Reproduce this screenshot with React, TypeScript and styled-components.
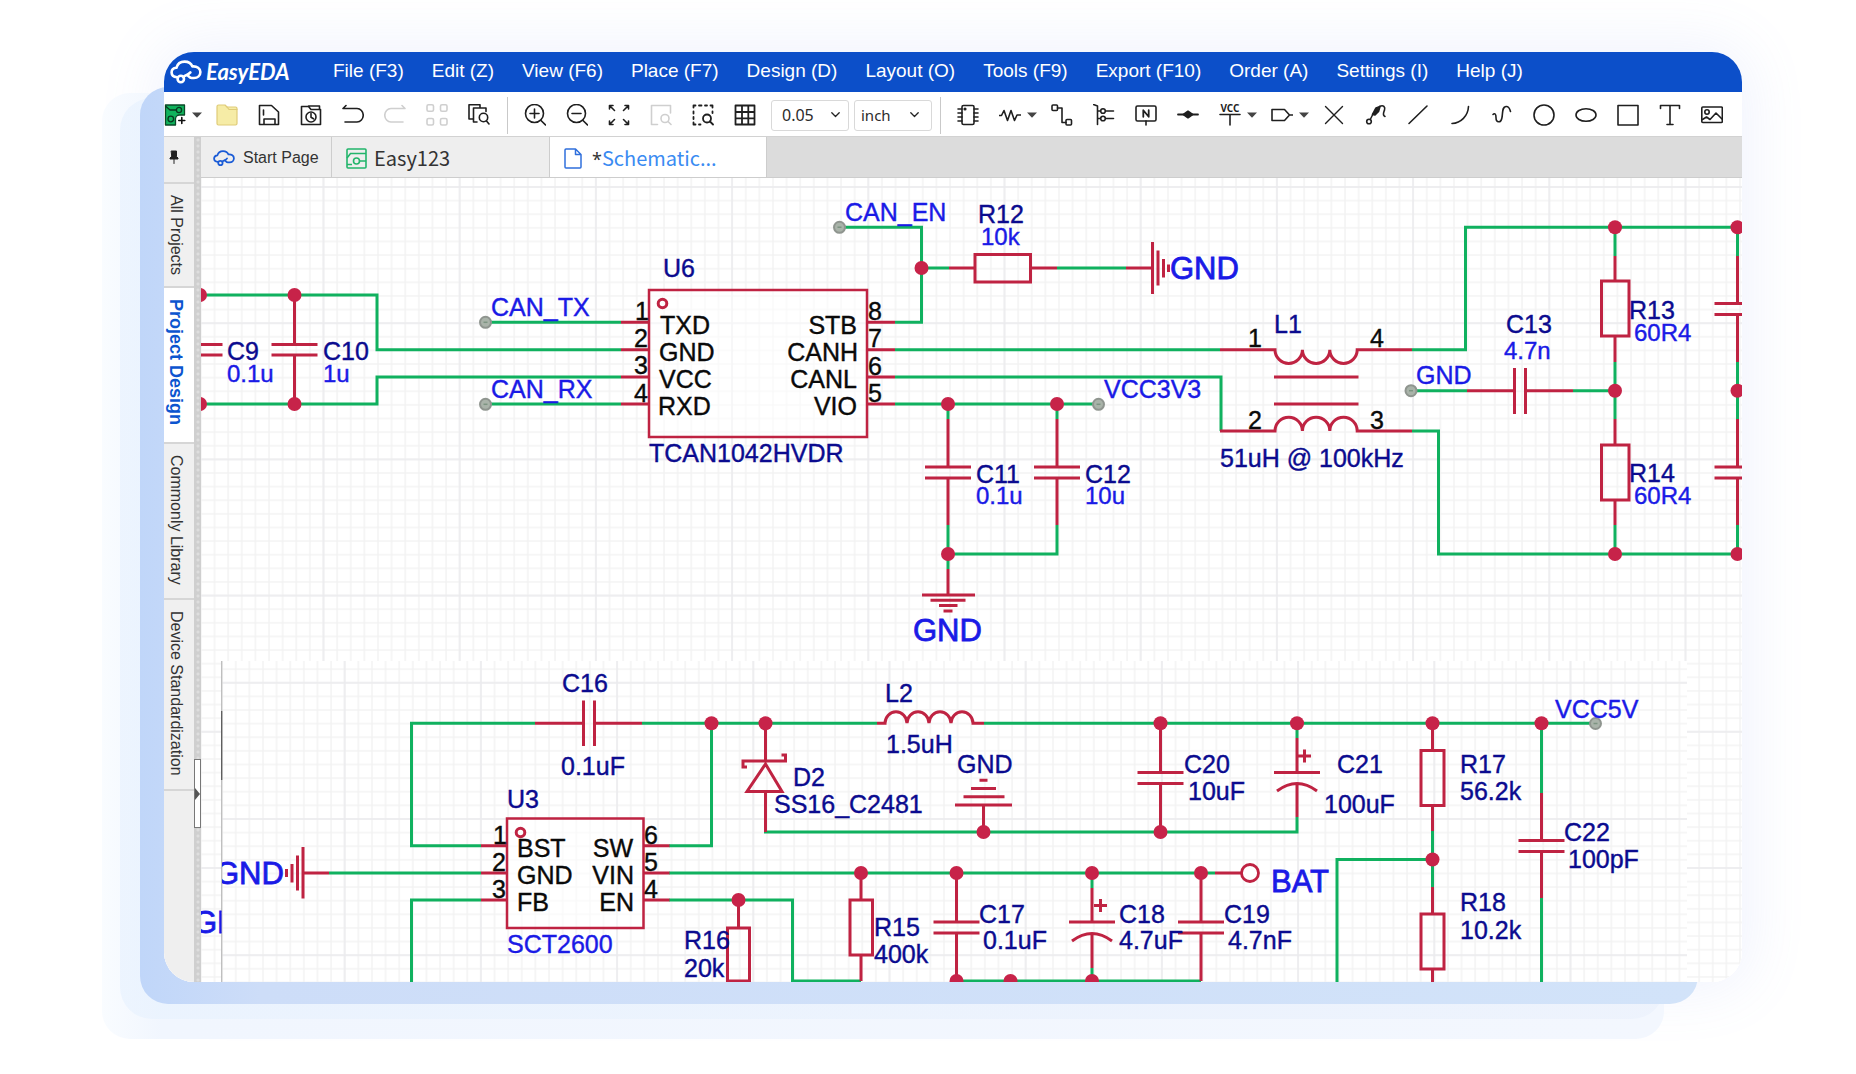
import React from "react";
import styled, { createGlobalStyle, css } from "styled-components";

const GlobalStyle = createGlobalStyle`
  * { box-sizing: border-box; }
  body {
    margin: 0;
    background: #ffffff;
    font-family: "Liberation Sans", Arial, sans-serif;
    color: #222;
    overflow-x: hidden;
  }
  button { font: inherit; color: inherit; border: 0; background: none; padding: 0; cursor: pointer; }
`;

/* ---------- page frame ---------- */

const Page = styled.div`
  padding: 52px 114px 92px 164px;
`;

const Stage = styled.div`
  position: relative;
  isolation: isolate;
`;

const BackCard = styled.div<{ $depth: "near" | "mid" | "far" }>`
  position: absolute;
  z-index: -1;
  ${(p) =>
    p.$depth === "near" &&
    css`
      inset: 35px 44px -22px -24px;
      border-radius: 28px;
      background: linear-gradient(to right, #c0d6f9 0, #cdddf8 120px, #d2e3f9 100%);
    `}
  ${(p) =>
    p.$depth === "mid" &&
    css`
      inset: 46px 78px -37px -44px;
      border-radius: 32px;
      background: linear-gradient(to right, rgba(232, 242, 254, 0.7), rgba(235, 241, 252, 0.7));
    `}
  ${(p) =>
    p.$depth === "far" &&
    css`
      inset: 41px 78px -57px -62px;
      border-radius: 28px;
      background: linear-gradient(to right, #f9fcff 0, #f1f6fe 60px, #f3f7fe 100%);
    `}
`;

const Window = styled.main`
  display: flex;
  flex-direction: column;
  overflow: hidden;
  border-radius: 30px;
  background: #fff;
`;

const Glow = styled.div`
  position: absolute;
  inset: 0;
  z-index: -1;
  border-radius: 30px;
  box-shadow: 0 0 60px 6px rgba(120, 150, 235, 0.12);
`;

/* ---------- title bar ---------- */

const TitleBar = styled.header`
  display: flex;
  align-items: center;
  height: 40px;
  padding-left: 6px;
  background: #0c4fc9;
  color: #fff;
`;

const Brand = styled.a`
  display: flex;
  align-items: center;
  gap: 4px;
  width: 150px;
  color: #fff;
  text-decoration: none;
  font: italic 700 22px/28px Lato, sans-serif;
`;

const Menu = styled.nav`
  display: flex;
  align-items: center;
  margin-left: 13px;
  gap: 28px;
`;

const MenuButton = styled.button`
  font-size: 19px;
  line-height: 24px;
  white-space: nowrap;
  padding-bottom: 2px;
`;

/* ---------- toolbar ---------- */

const ToolBar = styled.div`
  display: flex;
  align-items: center;
  height: 45px;
  padding-top: 2px;
  border-bottom: 1px solid #d2d2d2;
  background: #fff;
`;

const Tool = styled.button<{ $width?: number; $off?: boolean }>`
  display: flex;
  align-items: center;
  justify-content: center;
  flex: none;
  width: ${(p) => p.$width ?? 42}px;
  height: 36px;
  color: ${(p) => (p.$off ? "#cfcfcf" : "#1f1f1f")};
`;

const CaretButton = styled(Tool)`
  padding-left: 2px;
`;

const Split = styled.div<{ $tight?: boolean }>`
  display: flex;
  flex: none;
  padding-left: ${(p) => (p.$tight ? 0 : 10)}px;
`;

const Rule = styled.div<{ $side: number }>`
  flex: none;
  width: 1px;
  height: 37px;
  margin: 0 6px 0 ${(p) => p.$side}px;
  background: #c9c9c9;
`;

const Picker = styled.label<{ $text: number }>`
  position: relative;
  display: flex;
  align-items: center;
  flex: none;
  width: 78px;
  height: 31px;
  margin-left: 5px;
  border: 1px solid #d9d9d9;
  border-radius: 3px;
  select {
    appearance: none;
    width: 100%;
    height: 100%;
    border: 0;
    background: none;
    padding: 0 20px 0 ${(p) => (p.$text === 16 ? 10 : 6)}px;
    color: #2b2b2b;
    font: ${(p) => p.$text}px/28px "Noto Sans", sans-serif;
  }
  svg {
    position: absolute;
    right: ${(p) => (p.$text === 16 ? 8 : 12)}px;
    pointer-events: none;
  }
`;

/* ---------- body ---------- */

const Body = styled.div`
  display: flex;
  background: #fff;
`;

const SideBar = styled.aside`
  display: flex;
  flex-direction: column;
  flex: none;
  width: 30px;
  background: #efefef;
`;

const PinButton = styled.button`
  display: flex;
  justify-content: center;
  padding-top: 13px;
  padding-right: 10px;
  height: 47px;
  border-bottom: 2px solid #d6d6d6;
`;

const SideTab = styled.button<{ $active?: boolean; $size: number }>`
  writing-mode: vertical-rl;
  height: ${(p) => p.$size}px;
  width: 30px;
  padding: 11px 6px 0 0;
  text-align: left;
  line-height: 22px;
  white-space: nowrap;
  border-bottom: 2px solid #d6d6d6;
  font-size: ${(p) => (p.$active ? 18 : 16)}px;
  font-weight: ${(p) => (p.$active ? 700 : 400)};
  color: ${(p) => (p.$active ? "#0c55cf" : "#333")};
  background: ${(p) => (p.$active ? "#fff" : "#f0f0f0")};
`;

const Splitter = styled.div`
  display: flex;
  flex-direction: column;
  flex: none;
  width: 7px;
  padding-top: 622px;
  background: radial-gradient(circle at 4px 3px, #dedede 0 1px, transparent 2px) 0 0 / 7px 6px, #cfcfcf;
`;

const Collapse = styled.button`
  display: flex;
  align-items: center;
  width: 7px;
  height: 69px;
  border: 1px solid #777;
  background: #fff;
`;

const Workspace = styled.section`
  display: flex;
  flex-direction: column;
  flex: 1;
  min-width: 0;
`;

const TabStrip = styled.div`
  display: flex;
  height: 41px;
  background: #dcdcdc;
  border-bottom: 1px solid #cdcdcd;
`;

const Tab = styled.button<{ $width: number; $active?: boolean; $big?: boolean }>`
  display: flex;
  align-items: center;
  gap: ${(p) => (p.$big ? 7 : 8)}px;
  width: ${(p) => p.$width}px;
  padding-top: 2px;
  padding-left: ${(p) => (p.$big ? 14 : 12)}px;
  border-right: 1px solid #cdcdcd;
  background: ${(p) => (p.$active ? "#fff" : "#eeeeee")};
  color: #333;
  white-space: nowrap;
  font: ${(p) => (p.$big ? '20px/26px "Noto Sans CJK SC"' : '16px/22px "Liberation Sans"')}, sans-serif;
`;

const FileName = styled.span`
  padding-left: 3px;
  i { font-style: normal; font-family: "Noto Sans", sans-serif; font-size: 18px; }
  b { font-weight: 400; color: #3a8bf2; }
`;

const Sheet = styled.svg`
  display: block;
  width: 100%;
  height: auto;
  font-family: "Liberation Sans", Arial, sans-serif;
`;

/* ---------- icons ---------- */

const Icon = ({ children, w = 22, h = 22, sw = 1.6 }: { children: React.ReactNode; w?: number; h?: number; sw?: number }) => (
  <svg width={w} height={h} viewBox={`0 0 ${w} ${h}`} fill="none" stroke="currentColor" strokeWidth={sw} strokeLinecap="round" strokeLinejoin="round" aria-hidden="true">
    {children}
  </svg>
);

const Caret = () => (
  <Icon w={10} h={6}>
    <path d="M0 0.5h10L5 5.8z" fill="#444" stroke="none" />
  </Icon>
);

const Chevron = () => (
  <Icon w={9} h={6} sw={1.3}>
    <path d="M0.8 0.8l3.7 3.7 3.7-3.7" />
  </Icon>
);

const Cloud = ({ size, color, sw }: { size: number; color: string; sw: number }) => (
  <svg width={size} height={(size * 24) / 32} viewBox="0 0 32 24" fill="none" stroke={color} strokeWidth={sw} strokeLinecap="round" strokeLinejoin="round" aria-hidden="true">
    <path d="M7 17.200C3.600 16.800 1.600 15 1.600 12.400c0-2.600 2-4.400 4.800-4.600C7.400 4 10.600 1.600 14.600 1.600c3.800 0 6.600 1.800 7.800 4.800 4.600-.4 8 2 8 5.600 0 3.600-2.800 6-6.400 6h-2.400c-2 0-2.800-1.600-4.200-2.800" />
    <circle cx="10.800" cy="19" r="3.200" />
    <path d="M13.400 17c2.600-3 4-1 7-4.600" />
  </svg>
);

const icons: Record<string, React.ReactNode> = {
  create: (
    <Icon w={22} h={22} sw={1.3}>
      <path d="M1.500 1h19v10h-5a4 4 0 00-4 4V21H1.500z" fill="#10b35c" stroke="#0a4a28" />
      <path d="M2 2.500l4 3.500h6.500" stroke="#083a20" />
      <circle cx="15" cy="6" r="2.600" stroke="#083a20" />
      <circle cx="6.800" cy="15" r="2.800" stroke="#083a20" />
      <path d="M17.800 13.500v6M14.800 16.500h6" stroke="#111" strokeWidth="1.600" />
    </Icon>
  ),
  open: (
    <Icon sw={1.2}>
      <path d="M1 2.500a1.500 1.500 0 011.500-1.500h6.500l2 2H19.500A1.500 1.500 0 0121 4.500v15a1.500 1.500 0 01-1.500 1.500h-17A1.500 1.500 0 011 19.500z" fill="#f6eca6" stroke="#dfcb78" />
      <path d="M11 3l2 2.500h8" stroke="#dfcb78" />
    </Icon>
  ),
  save: (
    <Icon>
      <path d="M1.500 1.500h12l7 6.500v12.500h-19zM5.500 6v5M6 20.500v-5.500h11v5.500" />
    </Icon>
  ),
  history: (
    <Icon>
      <path d="M1.500 20.500v-18h7l2.500 3h9.500v15zM8.500 2h11v3" />
      <circle cx="11" cy="13" r="5" />
      <path d="M11 9.500v3.800l2.500 1.500" />
    </Icon>
  ),
  undo: (
    <Icon>
      <path d="M4 1.500L1 4.500h14a6 6.500 0 010 13.500H3" />
    </Icon>
  ),
  redo: (
    <Icon>
      <path d="M18 1.500L21 4.500H7a6 6.500 0 000 13.500h12" />
    </Icon>
  ),
  tiles: (
    <Icon>
      <rect x="1" y="0.800" width="6.500" height="6.500" rx="1.500" />
      <rect x="14.500" y="0.800" width="6.500" height="6.500" rx="1.500" />
      <rect x="1" y="14.500" width="6.500" height="6.500" rx="1.500" />
      <rect x="14.500" y="14.500" width="6.500" height="6.500" rx="1.500" />
    </Icon>
  ),
  find: (
    <Icon>
      <path d="M4.500 15H1V0.800h11V4M9 18H5.500V4h12.500v3.500" />
      <circle cx="15.500" cy="13.500" r="4.200" />
      <path d="M18.500 17l2.500 3" />
    </Icon>
  ),
  zoomIn: (
    <Icon>
      <circle cx="10.500" cy="9.500" r="9" />
      <path d="M17 16.500l4.500 4.500M10.500 5v9M6 9.500h9" />
    </Icon>
  ),
  zoomOut: (
    <Icon>
      <circle cx="10.500" cy="9.500" r="9" />
      <path d="M17 16.500l4.500 4.500M6 9.500h9" />
    </Icon>
  ),
  fit: (
    <Icon>
      <path d="M1.500 5v-3.500h3.500M1.500 1.500l5 5M17 1.500h3.500v3.500M20.500 1.500l-5 5M1.500 17v3.500h3.500M1.500 20.500l5-5M20.500 17v3.500h-3.500M20.500 20.500l-5-5" />
    </Icon>
  ),
  zoomSel: (
    <Icon>
      <path d="M7.500 20.500h-6v-19h19V9" />
      <circle cx="15" cy="14.500" r="4" />
      <path d="M18 17.500l3 3" />
    </Icon>
  ),
  marquee: (
    <Icon sw={1.8}>
      <path d="M1.500 3.500v-2h2M7 1.500h2.500M13 1.500h2M18.500 1.500h2v2M1.500 7.500v2M1.500 13v2M1.500 18.500v2h2M7 20.500h1.500M20.500 7.500v1.500" />
      <circle cx="15" cy="14.500" r="4" />
      <path d="M18 17.500l3 3" />
    </Icon>
  ),
  grid: (
    <Icon sw={1.8}>
      <path d="M1.500 1.500h19v19h-19zM8 1.500v19M14.300 1.500v19M1.500 8h19M1.500 14.300h19" />
    </Icon>
  ),
  chip: (
    <Icon>
      <rect x="5" y="1.500" width="12" height="19" rx="1.500" />
      <path d="M1 5h4M1 9h4M1 13h4M1 17h4M17 5h4M17 9h4M17 13h4M17 17h4" />
      <circle cx="8" cy="5" r="0.800" fill="currentColor" />
    </Icon>
  ),
  resistor: (
    <Icon>
      <path d="M0.500 11.500h2L5 6.500l3.500 10L12 6.500l3.500 10 2.500-5.500h3.500" />
    </Icon>
  ),
  wire: (
    <Icon>
      <rect x="1" y="1" width="5.500" height="5.500" rx="1" />
      <rect x="15" y="15.500" width="5.500" height="5.500" rx="1" />
      <path d="M6.500 4H11v14.500h4" />
    </Icon>
  ),
  bus: (
    <Icon>
      <path d="M0.500 0.500l4 1.500v18.500M4.500 7h16M4.500 14.500h16" />
      <circle cx="10" cy="7" r="2.300" fill="#fff" />
      <circle cx="10" cy="14.500" r="2.300" fill="#fff" />
    </Icon>
  ),
  net: (
    <Icon>
      <rect x="1" y="2" width="20" height="15" rx="1.500" />
      <path d="M11 17v4" />
      <path d="M8.300 12.800V6.200l5.400 6.600V6.200" strokeWidth="1.800" />
    </Icon>
  ),
  junction: (
    <Icon sw={1.8}>
      <path d="M1 10.500h20" />
      <path d="M6.500 10.500L11 7.300l4.500 3.200L11 13.700z" fill="currentColor" />
    </Icon>
  ),
  power: (
    <Icon>
      <text x="11" y="7.500" textAnchor="middle" fontSize="10" fontWeight="700" fontFamily="Noto Sans, sans-serif" fill="currentColor" stroke="none">VCC</text>
      <path d="M1 10.500h20M11 10.500v10.500" />
    </Icon>
  ),
  port: (
    <Icon>
      <path d="M1 5.500h12.500l5 5.500-5 5.500H1zM18.500 11H21.500" />
    </Icon>
  ),
  cross: (
    <Icon sw={1.4}>
      <path d="M2.500 2.500l17 17M19.500 2.500l-17 17" />
    </Icon>
  ),
  probe: (
    <Icon>
      <circle cx="4" cy="17.500" r="2.300" />
      <path d="M5.500 15L8 10" />
      <path d="M7.500 10.500L11 4l4-1.500-1.500 5L10 11z" fill="currentColor" />
      <path d="M14.500 2.500c4-2 6 .5 5 3.500s-2.500 5 .5 6.500" />
    </Icon>
  ),
  line: (
    <Icon>
      <path d="M2 19.500L20 2" />
    </Icon>
  ),
  arc: (
    <Icon>
      <path d="M19.500 2.500C19 12 12 19 3 19.500" />
    </Icon>
  ),
  curve: (
    <Icon>
      <path d="M2 10.500c2-2 3 0 3 3 0 5.500 5 6 6 0s0-10.500 4-11c3-.3 4 3 4.500 5" />
    </Icon>
  ),
  circle: (
    <Icon>
      <circle cx="11" cy="11" r="10" />
    </Icon>
  ),
  ellipse: (
    <Icon>
      <ellipse cx="11" cy="11" rx="10" ry="6.300" />
    </Icon>
  ),
  square: (
    <Icon>
      <rect x="1" y="1.500" width="20" height="19.500" />
    </Icon>
  ),
  text: (
    <Icon>
      <path d="M1.500 4.500v-3h19v3M11 1.500v19M8 20.500h6" />
    </Icon>
  ),
  image: (
    <Icon>
      <rect x="0.800" y="3" width="20.500" height="15.500" rx="1" />
      <circle cx="6" cy="8" r="2.200" />
      <path d="M1.500 15.500l4-2.500 3.500 2.500 6-6.500 6 6" />
    </Icon>
  ),
};

const fileTools = ["open", "save", "history", "undo", "redo", "tiles", "find"];
const viewTools = ["zoomIn", "zoomOut", "fit", "zoomSel", "marquee", "grid"];
const wireTools = ["wire", "bus", "net", "junction"];
const drawTools = ["cross", "probe", "line", "arc", "curve", "circle", "ellipse", "square", "text", "image"];
const disabled = ["redo", "tiles", "zoomSel"];

const ToolList = ({ names }: { names: string[] }) => (
  <>
    {names.map((n) => (
      <Tool key={n} aria-label={n} $off={disabled.includes(n)}>
        {icons[n]}
      </Tool>
    ))}
  </>
);

const SplitTool = ({ name, tight }: { name: string; tight?: boolean }) => (
  <Split $tight={tight}>
    <Tool $width={22} aria-label={name}>{icons[name]}</Tool>
    <CaretButton $width={20} aria-label={`${name} options`}><Caret /></CaretButton>
  </Split>
);

/* ---------- schematic ---------- */

const GREEN = "#10b15f";
const RED = "#bf2342";
const DOT = "#c72349";
const NAVY = "#0b0b8f";
const BLUE = "#1a1ae6";

const Wires = ({ d }: { d: string }) => <path d={d} fill="none" stroke={GREEN} strokeWidth="3" />;
const Part = ({ d }: { d: string }) => <path d={d} fill="none" stroke={RED} strokeWidth="3" strokeLinejoin="miter" />;
const Dots = ({ at }: { at: number[][] }) => (
  <>
    {at.map(([x, y]) => (
      <circle key={`${x}-${y}`} cx={x} cy={y} r="7" fill={DOT} />
    ))}
  </>
);
const Ports = ({ at }: { at: number[][] }) => (
  <>
    {at.map(([x, y]) => (
      <g key={`${x}-${y}`}>
        <circle cx={x} cy={y} r="5.500" fill="#a9b3a9" stroke="#8f958f" strokeWidth="2" />
        <path d={`M${x - 2} ${y}h4`} stroke="#7d9482" strokeWidth="1.500" />
      </g>
    ))}
  </>
);
const capV = (x: number, y: number) => `M${x - 23} ${y}h46M${x - 23} ${y + 11}h46`;

type Label = [string, number, number];
const Labels = ({ items, fill, size = 25, anchor }: { items: Label[]; fill: string; size?: number; anchor?: "end" | "middle" }) => (
  <g fill={fill} stroke={fill} strokeWidth={size > 30 ? 0.8 : 0.4} fontSize={size} textAnchor={anchor}>
    {items.map(([t, x, y]) => (
      <text key={`${t}-${x}-${y}`} x={anchor ? x : x + 1} y={y}>{t}</text>
    ))}
  </g>
);

const FINE = "#f3f3f3";
const COARSE = "#ebebee";

const Schematic = () => (
  <Sheet viewBox="201 178 1541 804" role="img" aria-label="CAN transceiver and power supply schematic">
    <defs>
      <pattern id="fine" width="13.620" height="13.620" patternUnits="userSpaceOnUse" x="322.500" y="186">
        <path d="M0 1H13.620M1 0V13.620" stroke={FINE} strokeWidth="1.500" />
      </pattern>
      <pattern id="coarse" width="136.200" height="136.200" patternUnits="userSpaceOnUse" x="322.500" y="186">
        <path d="M0 1H136.200M1 0V136.200" stroke={COARSE} strokeWidth="1.500" />
      </pattern>
      <pattern id="fineLow" width="13.620" height="13.620" patternUnits="userSpaceOnUse" x="343.700" y="681.800">
        <path d="M0 1H13.620M1 0V13.620" stroke={FINE} strokeWidth="1.500" />
      </pattern>
      <pattern id="coarseLow" width="136.200" height="136.200" patternUnits="userSpaceOnUse" x="343.700" y="681.800">
        <path d="M0 1H136.200M1 0V136.200" stroke={COARSE} strokeWidth="1.500" />
      </pattern>
      <clipPath id="gutter"><path d="M201 661h20.500v321h-20.500z" /></clipPath>
      <clipPath id="lowSheet"><path d="M222 661h1520v321h-1520z" /></clipPath>
    </defs>

    <path d="M201 178h1541v804H201z" fill="#fff" />
    <path d="M201 178h1541v804H201z" fill="url(#fine)" />
    <path d="M201 178h1541v804H201z" fill="url(#coarse)" />
    <path d="M222 661h1465v321H222z" fill="#fff" />
    <path d="M222 661h1465v321H222z" fill="url(#fineLow)" />
    <path d="M222 661h1465v321H222z" fill="url(#coarseLow)" />
    <path d="M221.700 661v321" stroke="#b9b9b9" strokeWidth="1.200" />
    <path d="M221.700 711v69" stroke="#555" strokeWidth="1.200" />

    {/* CAN transceiver: nets */}
    <Wires d="M201 295H377V349.700H621M201 404H377V377H621M485 322.300H621M485 404H621" />
    <Wires d="M895 322.300H921.500V227.300H839.500M921.500 268H949M1057 268H1126M895 349.700H1220M895 377H1221V431M895 404H1098" />
    <Wires d="M948 404V419M948 525V569M1057 404V419M1057 525V554H948" />
    <Wires d="M1412 349.700H1465.500V227.300H1742M1412 431H1438.500V554H1742M1411 390.700H1467M1573 390.700H1615" />
    <Wires d="M1615 227V256M1615 362V419M1615 525V554M1737.500 227V256M1737.500 362V419M1737.500 525V554" />

    {/* CAN transceiver: parts */}
    <Part d="M201 344.500h21.500M201 355h21.500M271.500 344.500h46M271.500 355h46M294.500 295V344.500M294.500 355V404" />
    <Part d="M621 322.300h28M621 349.700h28M621 377h28M621 404h28M867 322.300h28M867 349.700h28M867 377h28M867 404h28" />
    <path d="M649 290H867V437H649z" fill="#fff" fillOpacity="0.500" stroke={RED} strokeWidth="2.500" />
    <circle cx="662.500" cy="303.500" r="4.300" fill="none" stroke={RED} strokeWidth="3" />
    <Part d="M949 268H975M975 254.500H1030.500V282H975zM1030.500 268H1057M1126 268H1152.500M1152.500 242V294M1158 250.500V285.500M1163.500 259V277.500M1168.500 264.500V272" />
    <Part d={`M948 419V467M948 478V525${capV(948, 467)}M1057 419V467M1057 478V525${capV(1057, 467)}`} />
    <Part d="M948 569V595M922 595h53M930.500 600.300h35M939 605.500h18.500M943.500 611h9" />
    <Part d="M1220 349.700H1275a13.700 13.700 0 0027.400 0a13.700 13.700 0 0027.400 0a13.700 13.700 0 0027.400 0H1412M1274 377H1358.500M1274 404H1358.500M1220 431H1275a13.700 13.700 0 0127.400 0a13.700 13.700 0 0127.400 0a13.700 13.700 0 0127.400 0H1412" />
    <Part d="M1467 390.700H1514.500M1525.500 390.700H1573M1514.500 368v46M1525.500 368v46" />
    <Part d="M1615 256V281M1601.500 281H1629V336H1601.500zM1615 336V362M1615 419V445M1601.500 445H1629V500H1601.500zM1615 500V525" />
    <Part d={`M1737.500 256V303.500M1737.500 314.500V362M1737.500 419V467M1737.500 478V525${capV(1737.5, 303.5)}${capV(1737.5, 467)}`} />
    <Dots at={[[200, 295], [200, 404], [294.5, 295], [294.5, 404], [921.5, 268], [948, 404], [1057, 404], [948, 554], [1615, 227.3], [1615, 390.7], [1615, 554], [1737.5, 227.3], [1737.5, 390.7], [1737.5, 554]]} />
    <Ports at={[[485.5, 322.3], [485.5, 404.3], [839.5, 227.3], [1098.5, 404.3], [1411, 390.7]]} />

    {/* CAN transceiver: labels */}
    <Labels fill={NAVY} items={[["C9", 226, 360], ["C10", 322, 360], ["U6", 662, 277], ["TCAN1042HVDR", 648, 462], ["R12", 977, 223], ["C11", 975, 482.500], ["C12", 1084, 482.500], ["L1", 1273, 332.500], ["51uH @ 100kHz", 1219, 467], ["C13", 1505, 332.500], ["R13", 1628, 318.500], ["R14", 1628, 482]]} />
    <Labels fill={BLUE} size={24} items={[["0.1u", 226, 382], ["1u", 322, 382], ["10k", 980, 245], ["0.1u", 975, 504], ["10u", 1084, 504], ["4.7n", 1503, 359], ["60R4", 1633, 341], ["60R4", 1633, 504]]} />
    <Labels fill={BLUE} items={[["CAN_TX", 490, 316], ["CAN_RX", 490, 398], ["CAN_EN", 844, 221], ["VCC3V3", 1103, 397.500], ["GND", 1415, 384]]} />
    <Labels fill="#0a0a0a" items={[["TXD", 659, 333.500], ["GND", 658, 360.500], ["VCC", 658, 388], ["RXD", 657, 415]]} />
    <Labels fill="#0a0a0a" anchor="end" items={[["STB", 857, 333.500], ["CANH", 858, 360.500], ["CANL", 857, 388], ["VIO", 857, 415]]} />
    <Labels fill="#0a0a0a" anchor="end" items={[["1", 649, 320], ["2", 648, 347], ["3", 648, 374], ["4", 648, 402]]} />
    <Labels fill="#0a0a0a" items={[["8", 867, 320], ["7", 867, 347], ["6", 867, 374.500], ["5", 867, 401.500], ["1", 1247, 347], ["4", 1369, 347], ["2", 1247, 428.500], ["3", 1369, 428.500]]} />
    <Labels fill={BLUE} size={31} items={[["GND", 1169, 279], ["GND", 912, 641]]} />

    {/* Power supply: nets */}
    <Wires d="M535 723.300H411.500V845.700H481M642 723.300H877M984 723.300H1596M669 845.700H711.500V723.300M329 873H481M411.500 982V900H481" />
    <Wires d="M669 873H1215M669 900H792.500V981H861M764 832H1297V817M1297 723V738M956.500 981H1201M1092 873V888M1092 968V981" />
    <Wires d="M1432.500 831V887M1432.500 859.500H1337V982M1541.500 723V793M1541.500 898V982" />

    {/* Power supply: parts */}
    <Part d="M535 723.300H583.500M594.500 723.300H642M583.500 700.500v45.500M594.500 700.500v45.500" />
    <Part d="M481 845.700h26M481 873h26M481 900h26M643.500 845.700h26M643.500 873h26M643.500 900h26M329 873H303M303 847v51.500M297.500 855.500v35M292 864v18.500M286.500 869v8" />
    <path d="M507 818.500H643.500V928H507z" fill="#fff" fillOpacity="0.500" stroke={RED} strokeWidth="2.500" />
    <circle cx="520.500" cy="832.500" r="4.300" fill="none" stroke={RED} strokeWidth="3" />
    <Part d="M877 723.300H885a11 11.500 0 0122 0a11 11.500 0 0122 0a11 11.500 0 0122 0a11 11.500 0 0122 0H984" />
    <Part d="M765.500 723V761M747 767h-4v-6h42.500v-6h-4M765.500 764L747 791.500H782zM765.500 791.500V832" />
    <Part d="M983.500 832V805M955 805h57M963.500 796.700h41M971 788.500h25M979.500 780.300h8" />
    <Part d={`M1160.500 723V772.500M1160.500 783.500V832${capV(1160.5, 772.5)}M956.500 873V922M956.500 933V981${capV(956.5, 922)}M1201 873V922M1201 933V981${capV(1201, 922)}M1541.500 793V840.500M1541.500 851.500V898${capV(1541.5, 840.5)}`} />
    <Part d="M1297 738V772.500M1274 772.500h46M1297 783.500V817M1277 791q20 -15 40 0M1304.500 749.500v13M1298 756h13M1092 888V922M1069 922h46M1092 933V968M1072 941q20 -15 40 0M1100.500 899v13M1094 905.500h13" />
    <Part d="M1432.500 723V750.500M1421 750.500h23v55h-23zM1432.500 805.500V831M1432.500 887V914M1421 914h23v55h-23zM1432.500 969V982M861 873V900M850 900h22.500v55H850zM861 955V981M738.500 900V928M727.500 981V928H749.500V981zM1215 873H1241" />
    <circle cx="1250" cy="873" r="8.500" fill="#fff" stroke={RED} strokeWidth="2.800" />
    <Dots at={[[711.5, 723.3], [765.5, 723.3], [1160.5, 723.3], [1297, 723.3], [1432.5, 723.3], [1541.5, 723.3], [983.5, 832], [1160.5, 832], [861, 873], [956.5, 873], [1092, 873], [1201, 873], [738.5, 900], [1432.5, 859.5], [956.5, 981], [1010.5, 981], [1092, 981]]} />
    <Ports at={[[1595.5, 723.5]]} />

    {/* Power supply: labels */}
    <Labels fill={NAVY} items={[["C16", 561, 691.500], ["0.1uF", 560, 775], ["U3", 506, 807.500], ["L2", 884, 702], ["1.5uH", 885, 752.500], ["D2", 792, 786], ["SS16_C2481", 773, 813], ["GND", 956, 772.500], ["C20", 1183, 772.500], ["10uF", 1187, 799.500], ["C21", 1336, 772.500], ["100uF", 1323, 813], ["R17", 1459, 772.500], ["56.2k", 1459, 799.500], ["R18", 1459, 911], ["10.2k", 1459, 938.500], ["C22", 1563, 841], ["100pF", 1567, 868], ["R16", 683, 949], ["20k", 683, 976.500], ["R15", 873, 935.500], ["400k", 873, 963], ["C17", 978, 922.500], ["0.1uF", 982, 949], ["C18", 1118, 922.500], ["4.7uF", 1118, 949], ["C19", 1223, 922.500], ["4.7nF", 1227, 949]]} />
    <Labels fill={BLUE} items={[["SCT2600", 506, 953], ["VCC5V", 1554, 718]]} />
    <Labels fill="#0a0a0a" items={[["BST", 516, 857], ["GND", 516, 884], ["FB", 516, 911], ["6", 643, 843.500], ["5", 643, 871], ["4", 643, 898]]} />
    <Labels fill="#0a0a0a" anchor="end" items={[["SW", 633, 857], ["VIN", 634, 884], ["EN", 634, 911], ["1", 507, 843.500], ["2", 506, 871], ["3", 506, 898]]} />
    <Labels fill={BLUE} size={31} items={[["BAT", 1270, 892]]} />
    <g clipPath="url(#lowSheet)"><Labels fill={BLUE} size={31} items={[["GND", 214, 884]]} /></g>
    <g clipPath="url(#gutter)"><Labels fill={BLUE} size={31} items={[["GND", 192, 932.500]]} /></g>
  </Sheet>
);

/* ---------- app ---------- */

const menus = ["File (F3)", "Edit (Z)", "View (F6)", "Place (F7)", "Design (D)", "Layout (O)", "Tools (F9)", "Export (F10)", "Order (A)", "Settings (I)", "Help (J)"];

export default function App() {
  return (
    <>
      <GlobalStyle />
      <Page>
        <Stage>
          <Glow />
          <BackCard $depth="far" />
          <BackCard $depth="mid" />
          <BackCard $depth="near" />
          <Window>
            <TitleBar>
              <Brand href="#">
                <Cloud size={32} color="#fff" sw={2.6} />
                EasyEDA
              </Brand>
              <Menu>
                {menus.map((m) => (
                  <MenuButton key={m}>{m}</MenuButton>
                ))}
              </Menu>
            </TitleBar>

            <ToolBar>
              <SplitTool name="create" tight />
              <ToolList names={fileTools} />
              <Rule $side={7} />
              <ToolList names={viewTools} />
              <Picker $text={16}>
                <select aria-label="Grid size" defaultValue="0.05"><option>0.05</option></select>
                <Chevron />
              </Picker>
              <Picker $text={15}>
                <select aria-label="Unit" defaultValue="inch"><option>inch</option></select>
                <Chevron />
              </Picker>
              <Rule $side={8} />
              <ToolList names={["chip"]} />
              <SplitTool name="resistor" />
              <ToolList names={wireTools} />
              <SplitTool name="power" />
              <SplitTool name="port" />
              <ToolList names={drawTools} />
            </ToolBar>

            <Body>
              <SideBar>
                <PinButton aria-label="Pin panel">
                  <Icon w={10} h={14} sw={1}>
                    <path d="M2.500 1h5v5.500l1.500 1.500v1h-8V8L2.500 6.500z" fill="currentColor" />
                    <path d="M5 9v4.500" />
                  </Icon>
                </PinButton>
                <SideTab $size={104}>All Projects</SideTab>
                <SideTab $size={156} $active>Project Design</SideTab>
                <SideTab $size={156}>Commonly Library</SideTab>
                <SideTab $size={191}>Device Standardization</SideTab>
              </SideBar>
              <Splitter>
                <Collapse aria-label="Expand panel">
                  <svg width="5" height="12" viewBox="0 0 5 12" aria-hidden="true"><path d="M0 0l5 6-5 6z" fill="#555" /></svg>
                </Collapse>
              </Splitter>
              <Workspace>
                <TabStrip>
                  <Tab $width={131}>
                    <Cloud size={22} color="#1a5bd6" sw={2.6} />
                    Start Page
                  </Tab>
                  <Tab $width={218} $big>
                    <svg width="21" height="21" viewBox="0 0 21 21" fill="none" stroke="#22b56b" strokeWidth="1.600" aria-hidden="true">
                      <rect x="1" y="1" width="19" height="19" rx="1" />
                      <path d="M1 10l3.500-4.500H20M1 16.500h5M13.500 13H20" />
                      <circle cx="10.500" cy="13" r="3" />
                    </svg>
                    Easy123
                  </Tab>
                  <Tab $width={217} $big $active>
                    <svg width="18" height="21" viewBox="0 0 18 21" fill="none" stroke="#2f6fdc" strokeWidth="1.500" strokeLinejoin="round" aria-hidden="true">
                      <path d="M1 2a1 1 0 011-1h9.500L17 6.500V19a1 1 0 01-1 1H2a1 1 0 01-1-1zM11.500 1v5.500H17" />
                    </svg>
                    <FileName><i>*</i><b>Schematic...</b></FileName>
                  </Tab>
                </TabStrip>
                <Schematic />
              </Workspace>
            </Body>
          </Window>
        </Stage>
      </Page>
    </>
  );
}
